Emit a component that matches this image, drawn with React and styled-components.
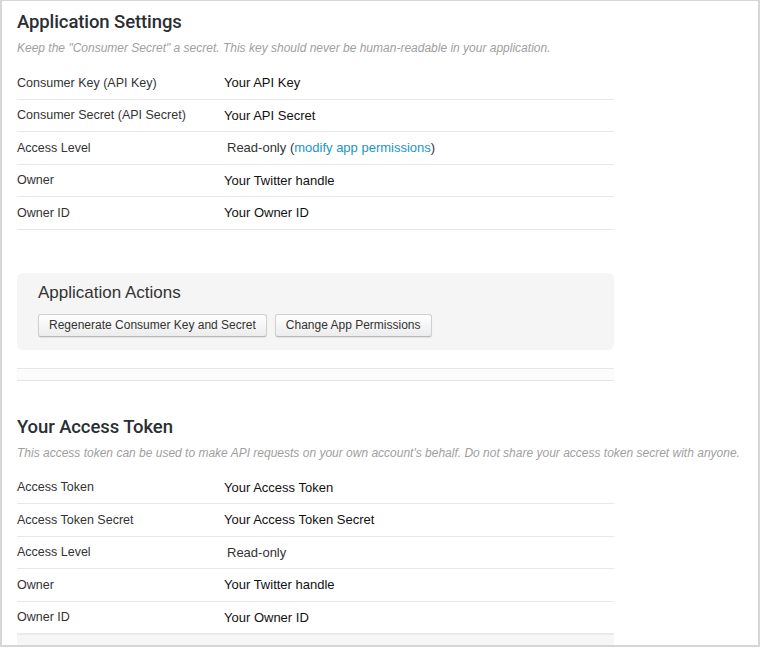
import React from "react";
import styled, { createGlobalStyle } from "styled-components";

const GlobalStyle = createGlobalStyle`
  body {
    margin: 0;
    background: #fff;
    font-family: "Liberation Sans", Helvetica, Arial, sans-serif;
  }
`;

// Data
const appSettings = [
  { label: "Consumer Key (API Key)", value: "Your API Key" },
  { label: "Consumer Secret (API Secret)", value: "Your API Secret" },
  { label: "Access Level", value: "Read-only", link: "modify app permissions", shift: true },
  { label: "Owner", value: "Your Twitter handle" },
  { label: "Owner ID", value: "Your Owner ID" },
];

const tokenSettings = [
  { label: "Access Token", value: "Your Access Token" },
  { label: "Access Token Secret", value: "Your Access Token Secret" },
  { label: "Access Level", value: "Read-only", shift: true },
  { label: "Owner", value: "Your Twitter handle" },
  { label: "Owner ID", value: "Your Owner ID" },
];

const SettingsTable = ({ rows }) => (
  <Table>
    {rows.map((row) => (
      <Row key={row.label}>
        <Label>{row.label}</Label>
        <Value $shift={row.shift}>
          {row.value}
          {row.link && (
            <>
              {" "}(<Link href="#">{row.link}</Link>)
            </>
          )}
        </Value>
      </Row>
    ))}
  </Table>
);

const App = () => {
  return (
    <>
      <GlobalStyle />
      <Frame>
        <Section>
          <Title>Application Settings</Title>
          <Hint>Keep the "Consumer Secret" a secret. This key should never be human-readable in your application.</Hint>
          <SettingsTable rows={appSettings} />
        </Section>

        <Actions>
          <ActionsTitle>Application Actions</ActionsTitle>
          <Buttons>
            <Button>Regenerate Consumer Key and Secret</Button>
            <Button>Change App Permissions</Button>
          </Buttons>
        </Actions>
        <Strip />

        <Section $top={34}>
          <Title>Your Access Token</Title>
          <Hint>This access token can be used to make API requests on your own account's behalf. Do not share your access token secret with anyone.</Hint>
          <SettingsTable rows={tokenSettings} />
        </Section>
        <Footer />
      </Frame>
    </>
  );
};

const Frame = styled.div`
  box-sizing: border-box;
  width: 760px;
  height: 647px;
  overflow: hidden;
  border: 2px solid #d6d6d6;
  border-top-width: 1px;
  padding-left: 15px;
  background: #fff;
`;

const Section = styled.section`
  padding-top: ${(p) => (p.$top !== undefined ? p.$top : 9)}px;
`;

const Title = styled.h2`
  margin: 0 0 6px;
  font-family: Roboto, "Liberation Sans", Arial, sans-serif;
  font-size: 18.5px;
  line-height: 24px;
  font-weight: 500;
  color: #292f33;
  letter-spacing: -0.1px;
`;

const Hint = styled.p`
  margin: 0 0 11px;
  font-size: 12px;
  line-height: 16px;
  font-style: italic;
  color: #a0a0a0;
  white-space: nowrap;
`;

const Table = styled.div`
  width: 597px;
`;

const Row = styled.div`
  display: grid;
  grid-template-columns: 207px 1fr;
  align-items: center;
  height: 31.5px;
  border-bottom: 1px solid #e8e8e8;
  font-size: 12.5px;
`;

const Label = styled.div`
  color: #333;
`;

const Value = styled.div`
  color: #111;
  font-size: 13px;
  padding-left: ${(p) => (p.$shift ? 3 : 0)}px;
  ${(p) => p.$shift && "color: #333;"}
`;

const Link = styled.a`
  color: #1b95c6;
  text-decoration: none;
`;

const Actions = styled.div`
  box-sizing: border-box;
  width: 597px;
  margin-top: 43px;
  padding: 10px 21px 13px;
  background: #f5f5f5;
  border-radius: 6px;
`;

const ActionsTitle = styled.h3`
  margin: 0 0 11px;
  font-size: 17px;
  line-height: 20px;
  font-weight: normal;
  color: #333;
`;

const Buttons = styled.div`
  display: flex;
  gap: 8px;
`;

const Button = styled.button`
  box-sizing: border-box;
  height: 23px;
  padding: 0 10px;
  font-family: "Liberation Sans", Helvetica, Arial, sans-serif;
  font-size: 12px;
  color: #333;
  background: linear-gradient(#ffffff, #ececec);
  border: 1px solid #d0d0d0;
  border-bottom-color: #b8b8b8;
  border-radius: 3px;
  box-shadow: 0 1px 1px rgba(0, 0, 0, 0.08);
  cursor: pointer;
`;

const Strip = styled.div`
  width: 597px;
  height: 11px;
  margin-top: 18px;
  background: #fbfbfb;
  border-top: 1px solid #e6e6e6;
  border-bottom: 1px solid #e6e6e6;
`;

const Footer = styled.div`
  width: 597px;
  height: 20px;
  background: #f6f6f6;
  border-top: 1px solid #ececec;
`;

export default App;
